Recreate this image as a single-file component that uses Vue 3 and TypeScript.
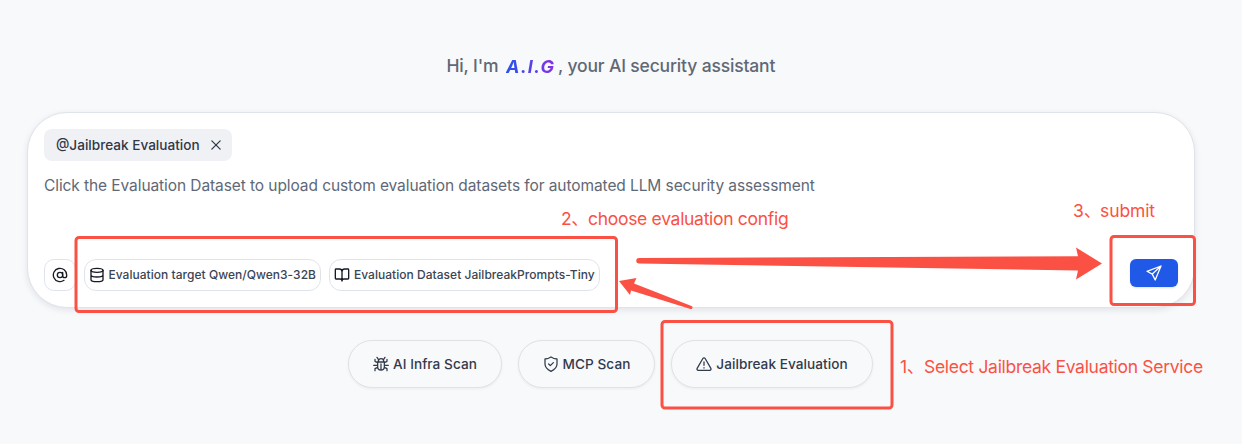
<script setup lang="ts">
interface Service {
  label: string
  icon: 'bug' | 'shield' | 'alert'
}

const services: Service[] = [
  { label: 'AI Infra Scan', icon: 'bug' },
  { label: 'MCP Scan', icon: 'shield' },
  { label: 'Jailbreak Evaluation', icon: 'alert' },
]
</script>

<template>
  <main class="page">
    <h1 class="greeting">
      <span class="hi">Hi, I'm</span>
      <span class="brand">A.I.G</span>
      <span class="rest">, your AI security assistant</span>
    </h1>

    <section class="composer">
      <div class="tag">
        <span class="tag-text">@Jailbreak Evaluation</span>
        <svg class="close" viewBox="0 0 12 12"><path d="M1 1l10 10M11 1L1 11" /></svg>
      </div>
      <p class="prompt">Click the Evaluation Dataset to upload custom evaluation datasets for automated LLM security assessment</p>
      <div class="toolbar">
        <button class="tool at">
          <svg class="icon" viewBox="0 0 24 24"><circle cx="12" cy="12" r="4" /><path d="M16 8v5a3 3 0 0 0 6 0v-1a10 10 0 1 0-4 8" /></svg>
        </button>
        <button class="tool target">
          <svg class="icon" viewBox="0 0 24 24"><ellipse cx="12" cy="5" rx="9" ry="3" /><path d="M3 5v14a9 3 0 0 0 18 0V5M3 12a9 3 0 0 0 18 0" /></svg>
          <span>Evaluation target Qwen/Qwen3-32B</span>
        </button>
        <button class="tool dataset">
          <svg class="icon" viewBox="0 0 24 24"><path d="M12 7v14M3 18a1 1 0 0 1-1-1V4a1 1 0 0 1 1-1h5a4 4 0 0 1 4 4 4 4 0 0 1 4-4h5a1 1 0 0 1 1 1v13a1 1 0 0 1-1 1h-6a3 3 0 0 0-3 3 3 3 0 0 0-3-3z" /></svg>
          <span>Evaluation Dataset JailbreakPrompts-Tiny</span>
        </button>
        <button class="send">
          <svg viewBox="0 0 16 16"><path d="M15 1L1 6.3l5.3 2.8L9.2 15zM15 1L6.3 9.1" /></svg>
        </button>
      </div>
    </section>

    <nav class="services">
      <button v-for="s in services" :key="s.label" class="service" :class="s.icon">
        <svg class="icon" viewBox="0 0 24 24">
          <path v-if="s.icon === 'bug'" d="M7 9h10v7a5 5 0 0 1-10 0zM8 9V8a4 4 0 0 1 8 0v1M12 12v9M8 5L6 2M16 5l2-3M7 10L3 8V5M17 10l4-2V5M7 14H1M17 14h6M7 17l-4 2v3M17 17l4 2v3" />
          <path v-else-if="s.icon === 'shield'" d="M12 1.500c3 2 6 3 9 3V12c0 6-4 8.500-9 11-5-2.500-9-5-9-11V4.500c3 0 6-1 9-3zM8.500 12l2.500 2.500 4.500-4.500" />
          <path v-else d="M10.300 3.700L1.700 18.500A2 2 0 0 0 3.400 21.500h17.200a2 2 0 0 0 1.700-3L13.700 3.700a2 2 0 0 0-3.400 0zM12 9v5M12 17.500v.5" />
        </svg>
        <span>{{ s.label }}</span>
      </button>
    </nav>

    <div class="annotations">
      <svg class="marks" viewBox="0 0 1242 444">
        <rect x="76" y="237.500" width="540.500" height="74" rx="3" />
        <rect x="1111" y="236.500" width="83.500" height="68" rx="3" />
        <rect x="662" y="321.500" width="230" height="86.500" rx="3" />
        <path class="arrow" d="M639 258L1078 256.200L1076 247.500L1102 263.500L1076 279.500L1078 270.500L639 263.500A2.750 2.750 0 0 1 639 258Z" />
        <path class="arrow" d="M619 281L636.500 278L634 283.500L691.500 306A1.500 1.500 0 0 1 690.500 309L631 290.500L630 295Z" />
      </svg>
      <span class="note one"><b>1、</b>Select Jailbreak Evaluation Service</span>
      <span class="note two"><b>2、</b>choose evaluation config</span>
      <span class="note three"><b>3、</b>submit</span>
    </div>
  </main>
</template>

<style>
body { margin: 0; background: #f8f9fb; }
</style>

<style scoped>
.page {
  position: relative;
  box-sizing: border-box;
  width: 1242px;
  height: 444px;
  overflow: hidden;
  padding: 52px 47px 0 27px;
  background: #f8f9fb;
  font-family: Inter, "Noto Sans CJK SC", sans-serif;
}
button { box-sizing: border-box; font: inherit; padding: 0; }
svg { fill: none; stroke: currentColor; stroke-linecap: round; stroke-linejoin: round; flex: none; }
.greeting {
  display: flex;
  margin: 0 0 0 419.5px;
  height: 28px;
  font-size: 17.5px;
  letter-spacing: -0.16px;
  font-weight: 500;
  line-height: 28px;
  color: #606875;
  white-space: pre;
}
.hi { width: 59.5px; }
.brand {
  width: 52px;
  font-size: 18px;
  font-style: italic;
  font-weight: 700;
  letter-spacing: 1.2px;
  line-height: 29px;
  color: transparent;
  background: linear-gradient(90deg, #2852ee, #8c2fe0);
  background-clip: text;
}
.composer {
  box-sizing: border-box;
  width: 1168px;
  height: 196px;
  margin-top: 32px;
  padding: 16px;
  border: 1px solid #e0e3e9;
  border-radius: 40px;
  background: #fff;
  box-shadow: 0 2px 6px rgba(20, 30, 50, 0.1);
}
.tag {
  box-sizing: border-box;
  display: flex;
  align-items: center;
  justify-content: space-between;
  width: 188px;
  height: 32px;
  padding: 0 11px 0 12px;
  border-radius: 8px;
  background: #f0f1f5;
  color: #303847;
  font-size: 13.6px;
  font-weight: 500;
  white-space: nowrap;
}
.tag-text { line-height: 18px; }
.close { width: 10px; height: 10px; overflow: visible; stroke-width: 1.500; }
.prompt { margin: 13px 0 0; height: 24px; line-height: 24px; font-size: 15.5px; letter-spacing: -0.085px; color: #606876; white-space: nowrap; }
.toolbar { display: flex; align-items: center; margin-top: 61px; height: 32px; }
.tool {
  display: flex;
  align-items: center;
  height: 32px;
  border: 1px solid #dfe4ec;
  border-radius: 12px;
  background: #fff;
  color: #3b4554;
  font-size: 12px;
  font-weight: 500;
  letter-spacing: 0.03px;
  white-space: nowrap;
}
.tool span { line-height: 16px; }
.tool .icon { width: 16px; height: 16px; stroke-width: 2; color: #161a22; }
.at { width: 32px; justify-content: center; border-radius: 10px; }
.target { width: 237px; margin-left: 8px; padding-left: 4px; gap: 3.5px; }
.dataset { width: 271px; margin-left: 8px; padding-left: 4px; gap: 4px; }
.send {
  display: grid;
  place-items: center;
  width: 48px;
  height: 28px;
  margin: -4px 0 0 auto;
  border: 0;
  border-radius: 6px;
  background: #2059e8;
  color: #fff;
  box-shadow: 0 1px 2px rgba(0, 0, 0, 0.12);
}
.send svg { width: 16px; height: 16px; stroke-width: 1.300; }
.services { display: flex; gap: 16px; margin: 32px 0 0 321px; }
.service {
  display: flex;
  align-items: center;
  justify-content: center;
  gap: 4px;
  height: 48px;
  border: 1px solid #e0e2e6;
  border-radius: 24px;
  background: #f8f9fb;
  color: #323b4b;
  font-size: 13.6px;
  letter-spacing: 0.05px;
  font-weight: 500;
  white-space: nowrap;
  box-shadow: 0 1px 3px rgba(0, 0, 0, 0.06);
}
.service span { line-height: 18px; padding-bottom: 1px; }
.service .icon { width: 16px; height: 16px; stroke-width: 1.900; }
.bug { width: 154px; }
.shield { width: 137px; }
.alert { width: 202px; }
.annotations { position: absolute; inset: 0; color: #fb5144; }
.marks { position: absolute; inset: 0; width: 1242px; height: 444px; stroke-width: 3; }
.arrow { fill: currentColor; stroke: none; }
.note { position: absolute; display: flex; font-size: 17.5px; letter-spacing: -0.3px; line-height: 26px; white-space: nowrap; }
.note b { width: 27px; font-weight: 400; white-space: nowrap; }
.one { left: 900px; top: 354px; }
.one b { width: 24px; }
.two { left: 561px; top: 206px; }
.three { left: 1073px; top: 198px; letter-spacing: -0.1px; }
</style>
